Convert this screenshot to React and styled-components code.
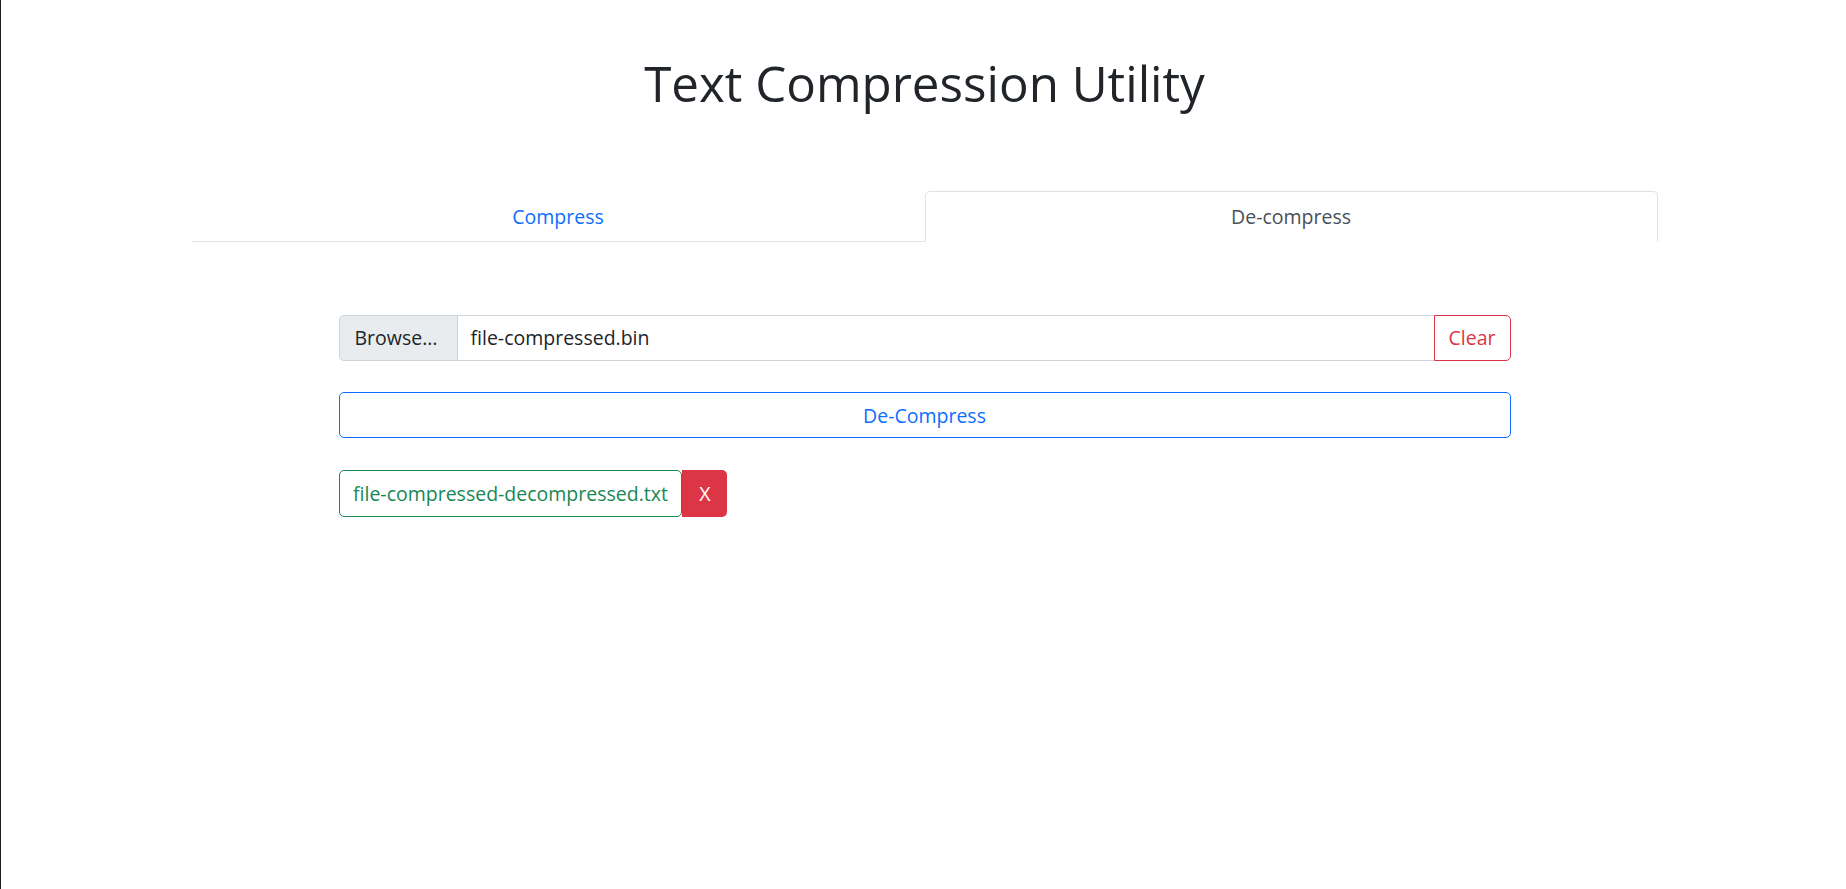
import React from "react";
import styled, { createGlobalStyle } from "styled-components";

const colors = {
  text: "#212529",
  muted: "#495057",
  primary: "#0d6efd",
  danger: "#dc3545",
  success: "#198754",
  border: "#dee2e6",
  inputBorder: "#ced4da",
  addon: "#e9ecef",
};

const GlobalStyle = createGlobalStyle`
  * { box-sizing: border-box; }
  html { font-size: 19.5px; }
  body {
    margin: 0;
    padding-left: 2px;
    min-height: 100vh;
    border-left: 1px solid #1e1e1e;
    background: #fff;
    color: ${colors.text};
    font-family: "Open Sans", "Noto Sans", sans-serif;
    line-height: 1.5;
  }
`;

export default function App() {
  return (
    <>
      <GlobalStyle />
      <Page>
        <Title>Text Compression Utility</Title>
        <Tabs>
          <Tab>Compress</Tab>
          <Tab active>De-compress</Tab>
        </Tabs>
        <Form>
          <InputGroup>
            <Addon>Browse…</Addon>
            <FileName>file-compressed.bin</FileName>
            <ClearButton>Clear</ClearButton>
          </InputGroup>
          <WideButton>De-Compress</WideButton>
          <ResultRow>
            <ResultFile>file-compressed-decompressed.txt</ResultFile>
            <RemoveButton>X</RemoveButton>
          </ResultRow>
        </Form>
      </Page>
    </>
  );
}

const Page = styled.div`
  width: 1466px;
  margin: 0 auto;
  padding-top: 53px;
`;

const Title = styled.h1`
  margin: 0 0 79px;
  text-align: center;
  font-size: 49.3px;
  font-weight: 400;
  line-height: 1.2;
  color: ${colors.text};
`;

const Tabs = styled.nav`
  display: flex;
  border-bottom: 1px solid ${colors.border};
`;

const Tab = styled.div`
  flex: 1;
  text-align: center;
  padding: 9.75px 19.5px;
  margin-bottom: -1px;
  border: 1px solid ${(p) => (p.active ? colors.border : "transparent")};
  border-bottom-color: ${(p) => (p.active ? "#fff" : "transparent")};
  border-radius: 5px 5px 0 0;
  background: ${(p) => (p.active ? "#fff" : "transparent")};
  font-size: 19.5px;
  line-height: 1.5;
  color: ${(p) => (p.active ? colors.muted : colors.primary)};
`;

const Form = styled.div`
  width: 1172px;
  margin: 73px auto 0;
  display: flex;
  flex-direction: column;
  gap: 31.5px;
`;

const InputGroup = styled.div`
  display: flex;
  height: 46px;
  font-size: 19.5px;
`;

const Addon = styled.div`
  display: flex;
  align-items: center;
  padding: 0 15px;
  width: 119px;
  background: ${colors.addon};
  border: 1px solid ${colors.inputBorder};
  border-radius: 5px 0 0 5px;
  color: ${colors.text};
  white-space: nowrap;
`;

const FileName = styled.div`
  flex: 1;
  display: flex;
  align-items: center;
  padding: 0 13px;
  border: 1px solid ${colors.inputBorder};
  border-left: none;
  border-right: none;
  color: ${colors.text};
`;

const ClearButton = styled.button`
  width: 77px;
  background: #fff;
  border: 1px solid ${colors.danger};
  border-radius: 0 5px 5px 0;
  color: ${colors.danger};
  font: inherit;
  font-size: 19.5px;
  cursor: pointer;
`;

const WideButton = styled.button`
  height: 46px;
  width: 100%;
  background: #fff;
  border: 1px solid ${colors.primary};
  border-radius: 5px;
  color: ${colors.primary};
  font-family: inherit;
  font-size: 19.5px;
  cursor: pointer;
`;

const ResultRow = styled.div`
  display: flex;
  height: 47px;
  font-size: 19.5px;
`;

const ResultFile = styled.div`
  display: flex;
  align-items: center;
  padding: 0 13.5px;
  border: 1px solid ${colors.success};
  border-radius: 5px;
  color: ${colors.success};
  white-space: nowrap;
`;

const RemoveButton = styled.button`
  width: 45px;
  border: none;
  border-radius: 0 5px 5px 0;
  background: ${colors.danger};
  color: #fff;
  font-family: inherit;
  font-size: 19.5px;
  cursor: pointer;
`;
